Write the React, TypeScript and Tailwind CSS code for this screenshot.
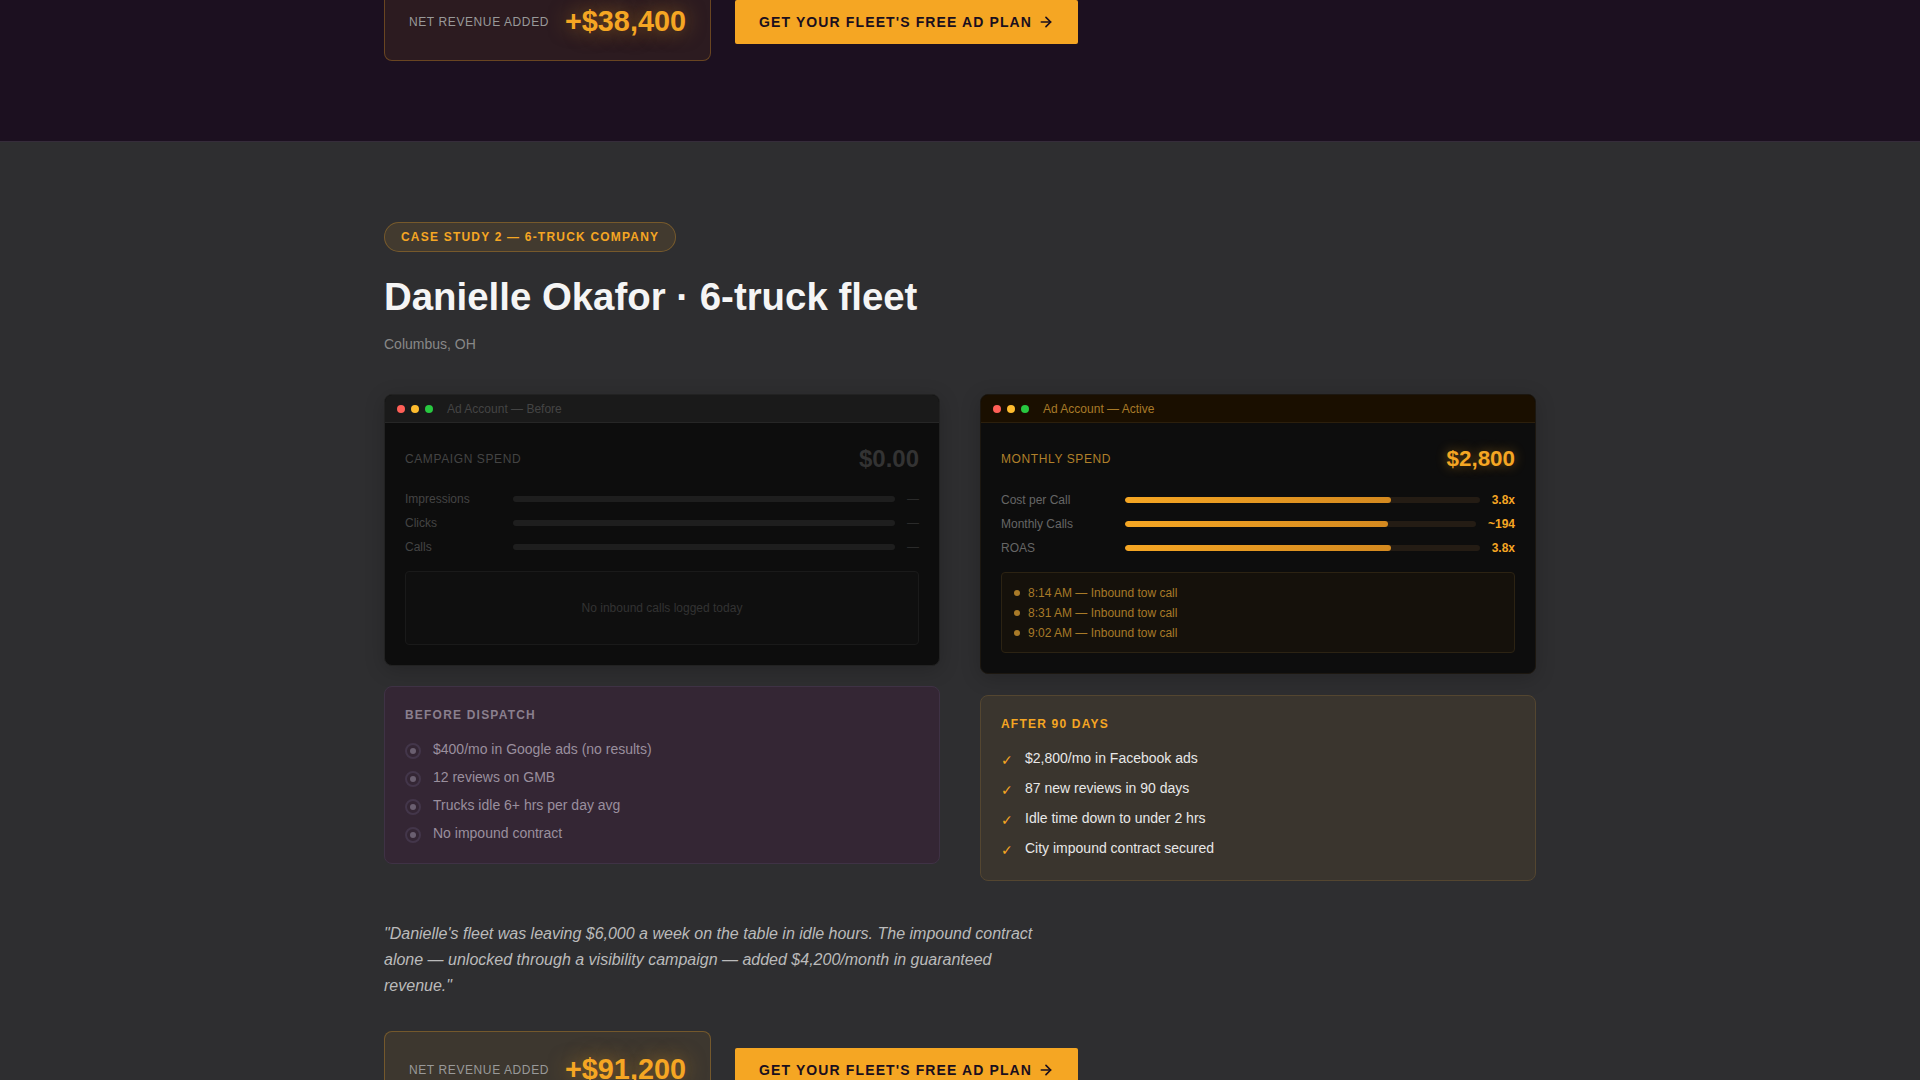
import React from "react";
import { ArrowRight } from "lucide-react";

function Dots() {
  return (
    <div className="flex gap-1.5 mr-2">
      <span className="w-2 h-2 rounded-full bg-[#ff5f57]" />
      <span className="w-2 h-2 rounded-full bg-[#febc2e]" />
      <span className="w-2 h-2 rounded-full bg-[#28c840]" />
    </div>
  );
}

function RevenueRow({ amount }: { amount: string }) {
  return (
    <div className="flex items-center gap-6">
      <div className="flex items-center gap-4 h-[78px] px-6 w-[327px] rounded-lg border border-[#f5a623]/30 bg-[#f5a623]/8">
        <span className="text-xs tracking-[0.05em] uppercase text-[#999] whitespace-nowrap">Net Revenue Added</span>
        <span className="text-[28.8px] font-bold text-[#f5a623] [text-shadow:0_0_20px_rgba(245,166,35,0.5)]">{amount}</span>
      </div>
      <a className="flex items-center gap-1.5 h-11 w-[343px] px-6 bg-[#f5a623] rounded-[2px] text-sm font-bold tracking-[0.08em] text-[#1a0f1e] whitespace-nowrap">
        GET YOUR FLEET'S FREE AD PLAN <ArrowRight size={18} strokeWidth={2.5} />
      </a>
    </div>
  );
}

const activeRows = [
  { label: "Cost per Call", value: "3.8x" },
  { label: "Monthly Calls", value: "~194" },
  { label: "ROAS", value: "3.8x" },
];

const beforeItems = [
  "$400/mo in Google ads (no results)",
  "12 reviews on GMB",
  "Trucks idle 6+ hrs per day avg",
  "No impound contract",
];

const afterItems = [
  "$2,800/mo in Facebook ads",
  "87 new reviews in 90 days",
  "Idle time down to under 2 hrs",
  "City impound contract secured",
];

const calls = ["8:14 AM — Inbound tow call", "8:31 AM — Inbound tow call", "9:02 AM — Inbound tow call"];

export default function App() {
  return (
    <div className="h-[1080px] overflow-hidden bg-[#2e2e30] font-['Liberation_Sans','DejaVu_Sans',sans-serif]">
      {/* previous case study, cut off by the scroll position */}
      <section className="h-[142px] bg-[#1c1020] border-b border-[#352c3a] overflow-hidden">
        <div className="w-[1152px] mx-auto -mt-[17px]">
          <RevenueRow amount="+$38,400" />
        </div>
      </section>

      <section className="w-[1152px] mx-auto pt-20">
        <span className="inline-flex items-center h-[30px] px-4 rounded-full border border-[#f5a623]/30 bg-[#f5a623]/10 text-xs font-bold tracking-[0.1em] text-[#f5a623]">
          CASE STUDY 2 — 6-TRUCK COMPANY
        </span>
        <h2 className="mt-[21px] text-[38.4px] leading-[48px] font-bold text-[#f5f5f5]">Danielle Okafor · 6-truck fleet</h2>
        <p className="mt-[13px] text-sm leading-5 text-[#888]">Columbus, OH</p>

        <div className="grid grid-cols-2 gap-10 items-start mt-10">
          <div className="flex flex-col gap-5">
            <div className="rounded-lg border border-[#222] bg-[#0d0d0d] shadow-[0_4px_20px_rgba(0,0,0,0.2)] overflow-hidden">
              <div className="flex items-center gap-1.5 h-7 px-3 bg-[#1a1a1a] border-b border-[#262626] text-xs text-[#444]">
                <Dots />
                Ad Account — Before
              </div>
              <div className="p-5">
                <div className="flex items-center justify-between h-8">
                  <span className="text-xs tracking-[0.05em] text-[#444]">CAMPAIGN SPEND</span>
                  <span className="text-2xl font-bold text-[#333]">$0.00</span>
                </div>
                <div className="flex flex-col gap-2.5 mt-[17px]">
                  {["Impressions", "Clicks", "Calls"].map((label) => (
                    <div key={label} className="flex items-center gap-3 h-3.5">
                      <span className="w-24 text-xs text-[#444]">{label}</span>
                      <div className="flex-1 h-1.5 rounded-full bg-[#1e1e1e]" />
                      <span className="text-xs text-[#2a2a2a]">—</span>
                    </div>
                  ))}
                </div>
                <div className="flex items-center justify-center h-[74px] mt-[17px] rounded border border-[#1a1a1a] bg-[#0f0f0f] text-xs text-[#333]">
                  No inbound calls logged today
                </div>
              </div>
            </div>

            <div className="h-[178px] px-5 pt-[19px] rounded-lg border border-[#3f3245] bg-[#342634]">
              <h4 className="text-xs leading-[18px] font-bold tracking-[0.1em] text-[#8a7f8e]">BEFORE DISPATCH</h4>
              <ul className="flex flex-col gap-2 mt-[15px]">
                {beforeItems.map((item) => (
                  <li key={item} className="flex items-start gap-3 text-sm leading-5 text-[#9a8f9e]">
                    <span className="flex items-center justify-center w-4 h-4 mt-1 rounded-full border-2 border-[#43364a]">
                      <span className="w-1.5 h-1.5 rounded-full bg-[#6a5f70]" />
                    </span>
                    {item}
                  </li>
                ))}
              </ul>
            </div>
          </div>

          <div className="flex flex-col gap-[21px]">
            <div className="rounded-lg border border-[#1c1710] bg-[#0d0d0d] shadow-[0_4px_20px_rgba(0,0,0,0.2)] overflow-hidden">
              <div className="flex items-center gap-1.5 h-7 px-3 bg-[#1a0f00] border-b border-[#2c1f0c] text-xs text-[#a87a28]">
                <Dots />
                Ad Account — Active
              </div>
              <div className="p-5">
                <div className="flex items-center justify-between h-8">
                  <span className="text-xs tracking-[0.05em] text-[#b0802a]">MONTHLY SPEND</span>
                  <span className="text-[22.4px] font-bold text-[#f5a623] [text-shadow:0_0_12px_rgba(245,166,35,0.45)]">$2,800</span>
                </div>
                <div className="flex flex-col gap-2.5 mt-[18px]">
                  {activeRows.map((row) => (
                    <div key={row.label} className="flex items-center gap-3 h-3.5">
                      <span className="w-28 text-xs text-[#666]">{row.label}</span>
                      <div className="flex-1 h-1.5 rounded-full bg-[#241c14] overflow-hidden">
                        <div className="w-3/4 h-full rounded-full bg-gradient-to-r from-[#f5a623] to-[#d4891f]" />
                      </div>
                      <span className="text-xs font-bold text-[#f5a623]">{row.value}</span>
                    </div>
                  ))}
                </div>
                <div className="flex flex-col gap-1.5 mt-[17px] px-3 pt-[13px] pb-3 rounded border border-[#2c2313] bg-[#15110b]">
                  {calls.map((call) => (
                    <div key={call} className="flex items-center gap-2 h-3.5 text-xs text-[#a87a28]">
                      <span className="w-1.5 h-1.5 rounded-full bg-[#a87a28]" />
                      {call}
                    </div>
                  ))}
                </div>
              </div>
            </div>

            <div className="h-[186px] px-5 pt-[19px] rounded-lg border border-[#544630] bg-[#3a352e]">
              <h4 className="text-xs leading-[18px] font-bold tracking-[0.1em] text-[#f5a623]">AFTER 90 DAYS</h4>
              <ul className="flex flex-col gap-2 mt-[15px]">
                {afterItems.map((item) => (
                  <li key={item} className="flex items-start gap-3 text-sm leading-5 text-[#e8e8e8]">
                    <span className="w-3 mt-[2px] text-[#f5a623]">✓</span>
                    {item}
                  </li>
                ))}
              </ul>
            </div>
          </div>
        </div>

        <p className="w-[660px] mt-10 text-base leading-[26px] italic text-[#bbb]">
          "Danielle's fleet was leaving $6,000 a week on the table in idle hours. The impound contract alone — unlocked through a visibility campaign — added $4,200/month in guaranteed revenue."
        </p>
        <div className="mt-8">
          <RevenueRow amount="+$91,200" />
        </div>
      </section>
    </div>
  );
}
